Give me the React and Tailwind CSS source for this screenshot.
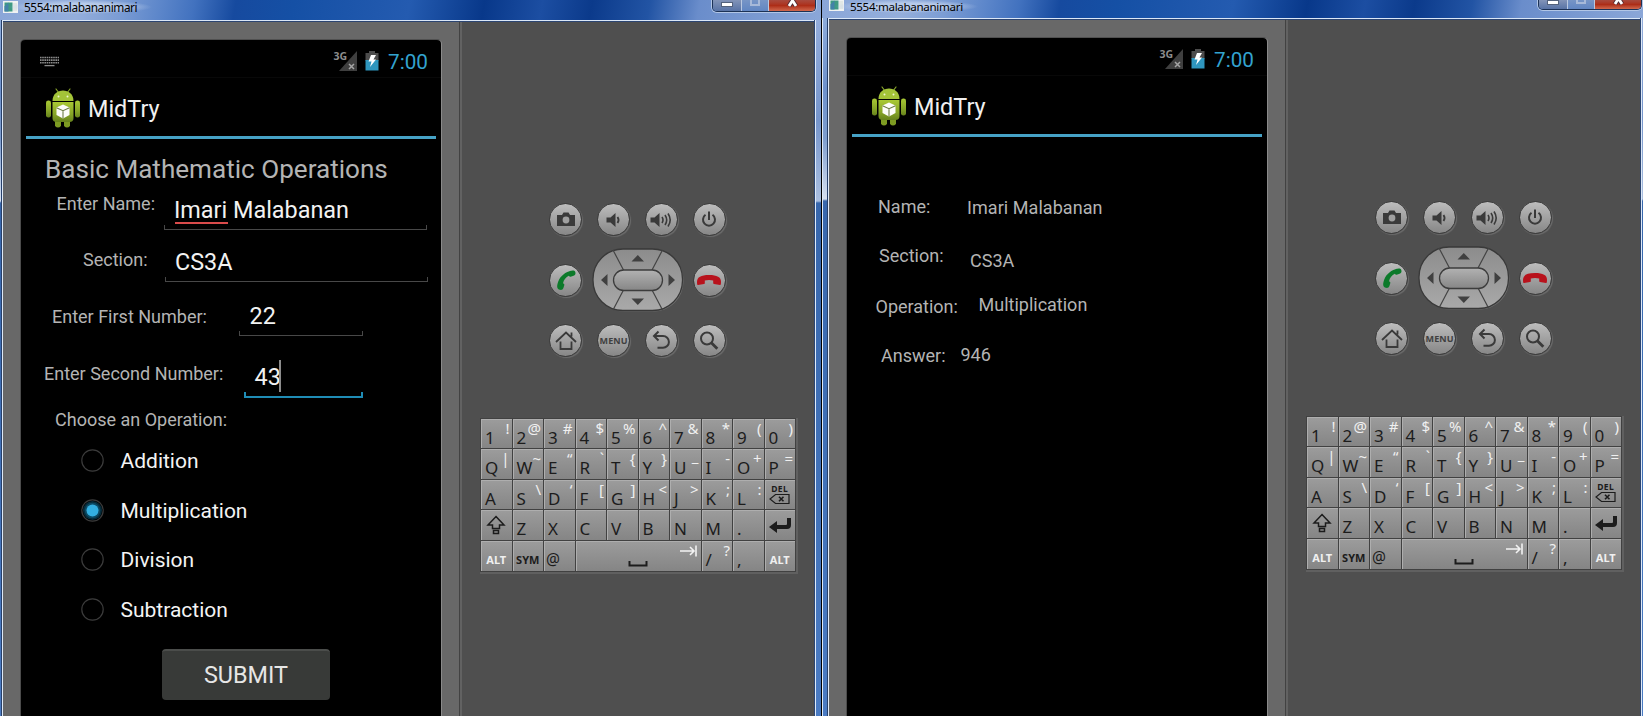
import React from "react";

const R = "font-['Roboto','Noto_Sans',sans-serif]";
const label = "text-[18px] leading-6 text-[#b4b4b4] whitespace-nowrap";
const entry = "text-[23.4px] leading-7 text-[#f2f2f2] whitespace-nowrap";

function AppIcon() {
  return (
    <svg width="36" height="40" viewBox="0 0 36 40">
      <defs>
        <linearGradient id="droid" x1="0" y1="0" x2="0" y2="1">
          <stop offset="0" stopColor="#a9c934" />
          <stop offset="0.6" stopColor="#87a527" />
          <stop offset="1" stopColor="#66821c" />
        </linearGradient>
      </defs>
      <path d="M11 1l3 4M25 1l-3 4" stroke="#86a32a" strokeWidth="1.2" strokeLinecap="round" />
      <path d="M7.500 13C7.500 6 12.500 2.500 18 2.500S28.500 6 28.500 13z" fill="#a3c338" />
      <circle cx="13.500" cy="8.500" r="1" fill="#eef5cf" />
      <circle cx="22.500" cy="8.500" r="1" fill="#eef5cf" />
      <rect x="1" y="12.500" width="5" height="17" rx="2.300" fill="url(#droid)" />
      <rect x="30" y="12.500" width="5" height="17" rx="2.300" fill="url(#droid)" />
      <path d="M10 30h6v8q-3 3-6 0zM19 30h6v8q-3 3-6 0z" fill="#7d9b22" />
      <path d="M7.500 14h21v16q0 4-4 4h-13q-4 0-4-4z" fill="url(#droid)" />
      <path d="M18 16.500l6.500 3v7.500l-6.500 3.500-6.500-3.500v-7.500z" fill="#fdfdfa" />
      <path d="M11.500 19.700l6.500 3 6.500-3M18 22.700v7.500" stroke="#6d7c45" strokeWidth="1.100" fill="none" />
    </svg>
  );
}

function StatusBar({ keyboard }) {
  return (
    <div className="flex h-[38px] shrink-0 items-start border-b border-[#080808] pl-[19px] pr-[13px]">
      {keyboard && (
        <svg className="mt-4" width="19" height="11" viewBox="0 0 19 11">
          {[1, 3.6, 6.2].map((y) => (
            <path key={y} d={`M0 ${y + 0.5}h19`} stroke="#8a8a8a" strokeWidth="1.600" strokeDasharray="1.600 0.600" />
          ))}
          <path d="M4.500 9.600h10" stroke="#8a8a8a" strokeWidth="1.300" />
        </svg>
      )}
      <div className="ml-auto flex">
        <span className="mt-[10px] font-['Noto_Sans','Open_Sans',sans-serif] text-[10.500px] font-bold leading-3 text-[#8d8d8d]">3G</span>
        <svg className="-ml-[8px] mt-[11px]" width="18" height="20" viewBox="0 0 18 20">
          <path d="M18 0v20H0z" fill="#3f3f3f" />
          <path d="M10 13l5 5M15 13l-5 5" stroke="#a5a5a5" strokeWidth="1.500" />
        </svg>
        <svg className="ml-2 mt-[11px]" width="14" height="20" viewBox="0 0 14 20">
          <path d="M4 0h6v2h3.500v8h-13V2H4z" fill="#4c4c4c" />
          <path d="M.5 9h13v10.500h-13z" fill="#2f96be" />
          <path d="M6 4h5L8.500 8.500H11L5 16l1.500-5.500H3.500z" fill="#fff" />
        </svg>
        <span className="ml-[9px] mt-[8px] text-[20.700px] leading-7 text-[#33a3cf]">7:00</span>
      </div>
    </div>
  );
}

function Screen({ keyboard, children }) {
  return (
    <div className={`${R} flex h-[700px] w-[420px] shrink-0 flex-col rounded-t bg-black shadow-[1px_0_0_#8a8a8a,-1px_0_0_#4c4c4c,0_-1px_0_#505050]`}>
      <StatusBar keyboard={keyboard} />
      <div className="mx-[5px] flex h-[61px] shrink-0 items-start border-b-[3px] border-[#46a2c6] pl-[19px]">
        <div className="mt-[10px]"><AppIcon /></div>
        <span className="ml-[7px] mt-[17px] text-[23.400px] leading-7 text-[#f0f0f0]">MidTry</span>
      </div>
      {children}
    </div>
  );
}

function Underline({ focus }) {
  return focus ? (
    <div className="h-[6px] border-x-[2px] border-b-2 border-[#1f8cb5]" />
  ) : (
    <div className="h-[5px] border-x border-b border-[#484848]" />
  );
}

function Radio({ text, on }) {
  return (
    <div className="flex h-[49.500px] items-center pl-[60px]">
      <svg width="23" height="23" viewBox="0 0 23 23">
        {on && <circle cx="11.500" cy="11.500" r="9.500" fill="#062c3b" />}
        {on && <circle cx="11.500" cy="11.500" r="7.800" fill="#0c4a63" />}
        <circle cx="11.500" cy="11.500" r="10.700" fill="none" stroke="#3b3b3b" strokeWidth="1.200" />
        {on && <circle cx="11.500" cy="11.500" r="6" fill="#33b0e2" />}
      </svg>
      <span className="ml-[16.500px] mt-px text-[21px] leading-7 text-[#f4f4f4]">{text}</span>
    </div>
  );
}

function FormScreen() {
  return (
    <Screen keyboard>
      <div className="h-[50px] pl-[24px] pt-[14px] text-[26.100px] leading-8 text-[#b4b4b4]">Basic Mathematic Operations</div>
      <div className="flex h-[51px] items-start">
        <div className={`${label} w-[143px] pl-[35.500px] pt-[3px]`}>Enter Name:</div>
        <div className="mt-[7px] flex h-[34px] w-[263px] flex-col justify-between">
          <div className={`${entry} pl-[10px]`}>
            <span className="relative">
              Imari
              <span className="absolute bottom-0 left-[1px] h-[2.500px] w-[53px] bg-[#d94b4b]" />
            </span>{" "}
            Malabanan
          </div>
          <Underline />
        </div>
      </div>
      <div className="flex h-[50px] items-start">
        <div className={`${label} w-[144px] pl-[62px] pt-2`}>Section:</div>
        <div className="mt-[8px] flex h-[34px] w-[263px] flex-col justify-between">
          <div className={`${entry} pl-[10px]`}>CS3A</div>
          <Underline />
        </div>
      </div>
      <div className="flex h-[55px] items-start">
        <div className={`${label} w-[218px] pl-[31px] pt-[15px]`}>Enter First Number:</div>
        <div className="mt-[12px] flex h-[34px] w-[124px] flex-col justify-between">
          <div className={`${entry} pl-[10.500px]`}>22</div>
          <Underline />
        </div>
      </div>
      <div className="flex h-[60px] items-start">
        <div className={`${label} w-[223px] pl-[23px] pt-[17px]`}>Enter Second Number:</div>
        <div className="mt-[18px] flex h-[35px] w-[119px] flex-col justify-between">
          <div className={`${entry} flex pl-[10.500px]`}>
            <span>43</span>
            <span className="-ml-[2px] -mt-[3px] h-8 w-[2px] bg-[#8c8c8c]" />
          </div>
          <Underline focus />
        </div>
      </div>
      <div className={`${label} h-[31px] pl-[34px] pt-[3px]`}>Choose an Operation:</div>
      <Radio text="Addition" />
      <Radio text="Multiplication" on />
      <Radio text="Division" />
      <Radio text="Subtraction" />
      <div className="ml-[141px] mt-[15px] flex h-[51px] w-[168px] items-center justify-center rounded-sm border-t-2 border-[#4b4d4b] bg-[#383a38] pt-px text-[23.400px] text-[#e6e6e6]">
        SUBMIT
      </div>
    </Screen>
  );
}

function ResultScreen() {
  return (
    <Screen>
      <div className="mt-[58px] flex h-[49px] items-start">
        <div className={`${label} w-[120px] pl-[31px]`}>Name:</div>
        <div className={`${label} pt-px tracking-[0.060px]`}>Imari Malabanan</div>
      </div>
      <div className="flex h-[49px] items-start">
        <div className={`${label} w-[120px] pl-[32px]`}>Section:</div>
        <div className={`${label} ml-[3px] pt-[5px]`}>CS3A</div>
      </div>
      <div className="flex h-[50px] items-start">
        <div className={`${label} w-[120px] pl-[28.500px] pt-[2px]`}>Operation:</div>
        <div className={`${label} ml-[11.500px]`}>Multiplication</div>
      </div>
      <div className="flex items-start">
        <div className={`${label} w-[120px] pl-[34px] pt-[1px]`}>Answer:</div>
        <div className={`${label} -ml-[6.500px]`}>946</div>
      </div>
    </Screen>
  );
}

function RoundButton({ children }) {
  return (
    <div className="flex h-[33px] w-[33px] items-center justify-center rounded-full border border-[#3c3c3c] bg-linear-to-b from-[#bdbdbd] to-[#878787] shadow-[1px_1px_1px_#6c6c6c]">
      {children}
    </div>
  );
}

function Ico({ children, size = 24 }) {
  return (
    <svg width={size} height={size} viewBox="0 0 24 24" fill="none" stroke="#3a3a3a" strokeWidth="2" className="shrink-0">
      {children}
    </svg>
  );
}

function DPad() {
  return (
    <svg width="92" height="64" viewBox="0 0 92 64">
      <defs>
        <linearGradient id="pad" x1="0" y1="0" x2="0" y2="1">
          <stop offset="0" stopColor="#8c8c8c" />
          <stop offset="1" stopColor="#a9a9a9" />
        </linearGradient>
        <linearGradient id="padc" x1="0" y1="0" x2="0" y2="1">
          <stop offset="0" stopColor="#b2b2b2" />
          <stop offset="1" stopColor="#868686" />
        </linearGradient>
      </defs>
      <rect x="2" y="2" width="89.500" height="61.500" rx="30" fill="#707070" />
      <rect x="1" y="1" width="89.500" height="61.500" rx="30" fill="url(#pad)" stroke="#393939" strokeWidth="1.300" />
      <path d="M21 2l11 21M70.500 2l-11 21M21 62l11-21M70.500 62l-11-21" stroke="#444" strokeWidth="1.200" />
      <rect x="21.500" y="22" width="49" height="20.500" rx="10.200" fill="url(#padc)" stroke="#3c3c3c" strokeWidth="1.300" />
      <path d="M39.500 13.500h12.500l-6.200-6.500zM39.500 50.500h12.500l-6.200 6.500zM15.500 26v12l-6.500-6zM76.500 26v12l6.500-6z" fill="#404040" />
    </svg>
  );
}

function Controls() {
  return (
    <div className="ml-[80px] mt-[167.500px] grid w-[191px] grid-cols-4 grid-rows-[60.500px_60.500px_60.500px] place-items-center">
      <RoundButton>
        <Ico>
          <path d="M3 7h5l1.500-2.500h5L16 7h5v11H3z" fill="#3a3a3a" stroke="none" />
          <circle cx="12" cy="12" r="3.400" fill="#a0a0a0" stroke="none" />
        </Ico>
      </RoundButton>
      <RoundButton>
        <Ico>
          <path d="M4.500 9.500h4l5-4.500v14l-5-4.500h-4z" fill="#3a3a3a" stroke="none" />
          <path d="M15.500 9q2.200 3 0 6" strokeWidth="1.800" />
        </Ico>
      </RoundButton>
      <RoundButton>
        <Ico>
          <path d="M1.500 9.500h4l5-4.500v14l-5-4.500h-4z" fill="#3a3a3a" stroke="none" />
          <path d="M13 9q2 3 0 6M16 7q3.400 5 0 10M19 5.500q4.400 6.500 0 13" strokeWidth="1.600" />
        </Ico>
      </RoundButton>
      <RoundButton>
        <Ico>
          <path d="M12 3.500v8.500M8.500 6.800a6 6 0 1 0 7 0" />
        </Ico>
      </RoundButton>
      <RoundButton>
        <Ico>
          <path d="M3.500 16C5 9.500 9.500 5 15.500 3.200l.3-.1c1.700-.6 4.700-1.300 5.500.9.700 2-.3 3.200-1.700 3.700l-2.200.8c-1.200.4-2 .2-2.600-.8C12 9 9.700 11.800 9 15.200c1.300.5 1.600 1.200 1.200 2.400l-.8 2.400c-.5 1.400-1.700 2.200-3.600 1.800C3.200 21.200 2.800 19 3.500 16z" fill="#0c7a2a" stroke="none" />
        </Ico>
      </RoundButton>
      <div className="col-span-2 -my-1"><DPad /></div>
      <RoundButton>
        <svg width="26" height="14" viewBox="0 0 26 14" className="shrink-0">
          <path d="M1 9C1 4 5 2 13 2s12 2 12 7c0 2.600-.4 3-1 3l-6-1c-.8-.2-.8-.6-.8-1V7.500q-4.200-1-8.400 0V10c0 .6 0 .8-.8 1l-6 1C1.400 12 1 11.600 1 9z" fill="#b8121c" />
        </svg>
      </RoundButton>
      <RoundButton>
        <Ico>
          <path d="M2 13L12 3.500 22 13M17.500 7.500V3.500M6.500 12.500V20h11v-7.500" strokeWidth="1.800" />
        </Ico>
      </RoundButton>
      <RoundButton>
        <span className="font-['Open_Sans','Noto_Sans',sans-serif] text-[9px] font-bold tracking-[0.100px] text-[#404040]">MENU</span>
      </RoundButton>
      <RoundButton>
        <Ico>
          <path d="M9.500 2.500L5 7l4.500 4.500M5 7h9a5.900 5.900 0 0 1 0 11.800H8.500" />
        </Ico>
      </RoundButton>
      <RoundButton>
        <Ico>
          <circle cx="10" cy="9.500" r="6" />
          <path d="M14.300 13.800l6 6" strokeWidth="2.800" />
        </Ico>
      </RoundButton>
    </div>
  );
}

const keyRows = [
  ["1!", "2@", "3#", "4$", "5%", "6^", "7&", "8*", "9(", "0)"],
  ["Q|", "W~", "E“", "R`", "T{", "Y}", "U_", "I-", "O+", "P="],
  ["A", "S\\", "D‘", "F[", "G]", "H<", "J>", "K;", "L:"],
];

const keyFace = "flex min-w-0 bg-linear-to-b from-[#9c9c9c] to-[#858585] shadow-[inset_1px_1px_0_#aeaeae]";

function Key({ k }) {
  const tone = k[0] === "U" ? "leading-[14px]" : "leading-[19px]";
  return (
    <div className={`${keyFace} pl-[4px] pr-[2px]`}>
      <span className="mt-[7px] text-[17px] leading-6 text-[#1c1c1c]">{k[0]}</span>
      {k[1] && <span className={`-ml-2 grow text-right text-[15px] text-[#f0f0f0] ${tone}`}>{k[1]}</span>}
    </div>
  );
}

const small = "items-end justify-center pb-[3px] text-[11px] font-bold leading-[16px]";

function Keyboard() {
  return (
    <div className="ml-[18px] mt-[46.500px] grid h-[154px] w-[316px] grid-cols-10 grid-rows-5 gap-px border border-[#414141] bg-[#414141] font-['Noto_Sans','Open_Sans',sans-serif] shadow-[1px_1px_0_1px_#606060]">
      {keyRows.flat().map((k) => <Key key={k} k={k} />)}
      <div className={`${keyFace} flex-col items-center pt-[4px]`}>
        <span className="text-[8.500px] font-bold leading-[9px] tracking-[0.500px] text-[#1c1c1c]">DEL</span>
        <svg width="21" height="12" viewBox="0 0 21 12">
          <path d="M6.500 1.500H20v9H6.500L1 6z" fill="none" stroke="#1c1c1c" strokeWidth="1.200" />
          <path d="M10 3.800l4.500 4.500M14.500 3.800L10 8.300" stroke="#1c1c1c" strokeWidth="1.600" />
        </svg>
      </div>
      <div className={`${keyFace} items-center justify-center`}>
        <svg width="20" height="20" viewBox="0 0 20 20" fill="none" stroke="#1c1c1c" strokeWidth="1.500">
          <path d="M10 1.500L18 10h-4.500v3.500h-7V10H2zM7.500 15.500h5v3h-5z" />
        </svg>
      </div>
      {["Z", "X", "C", "V", "B", "N", "M", "."].map((k) => <Key key={k} k={k} />)}
      <div className={`${keyFace} items-center justify-center`}>
        <svg width="24" height="18" viewBox="0 0 24 18">
          <path d="M1 11l8-6v4h9q1 0 1-1V2h4v7q0 4-4 4H9v4z" fill="#1c1c1c" />
        </svg>
      </div>
      <div className={`${keyFace} ${small} text-[#f0f0f0]`}>ALT</div>
      <div className={`${keyFace} ${small} text-[#1c1c1c]`}>SYM</div>
      <div className={`${keyFace} items-end pb-[2px] pl-[2px] text-[15.500px] leading-5 text-[#1c1c1c]`}>@</div>
      <div className={`${keyFace} col-span-4`}>
        <svg width="125" height="30" viewBox="0 0 125 30" fill="none">
          <path d="M53.500 20v4.500h17V20" stroke="#1c1c1c" strokeWidth="2" />
          <path d="M104 10h14M114 6l4 4-4 4M120 4.500v11" stroke="#f2f2f2" strokeWidth="1.600" />
        </svg>
      </div>
      <Key k="/?" />
      <Key k="," />
      <div className={`${keyFace} ${small} text-[#f0f0f0]`}>ALT</div>
    </div>
  );
}

function TitleBar({ short }) {
  return (
    <div className={`${short ? "h-[18px] pr-[1px]" : "h-5 pr-[5px]"} flex shrink-0 items-start bg-[linear-gradient(100deg,#8aa6d8_0%,#94aedb_10%,#7c9dd4_15%,#5c86ca_20%,#4272bf_24%,#164a9f_29%,#1550a5_36%,#245bb0_50%,#08388a_59%,#1c4ea2_66%,#0b3a8b_72%,#2254a4_79%,#6a8dcb_85%,#8ba7d8_100%)] pl-[7px]`}>
      <svg className={short ? "-mt-px" : "mt-px"} width="15" height="12" viewBox="0 0 15 12">
        <rect width="15" height="12" fill="#f0f2f2" />
        <rect x="1.500" y="1.500" width="8" height="9" fill="#3f9a83" />
        <path d="M1.500 10.500v-5l4-4v9z" fill="#4382a8" />
        <path d="M11 2v8M13 2v8" stroke="#d3dcd8" />
      </svg>
      <span className={`${short ? "text-[11.600px] leading-[13px] tracking-[-0.330px]" : "text-[11.800px] leading-[14px] tracking-[-0.420px]"} -ml-[9px] bg-[radial-gradient(closest-side,#b7caea_50%,transparent)] px-[15px] font-['Noto_Sans','Open_Sans',sans-serif] text-black`}>
        5554:malabananimari
      </span>
      <div className={`${short ? "h-[10px]" : "h-3"} ml-auto flex w-[104px] overflow-hidden rounded-b-[5px] border border-t-0 border-[#1c3256] shadow-[0_0_0_1px_#b2c6e6]`}>
        <div className="flex w-[29px] items-end justify-center border-r border-[#b9c8e0] bg-linear-to-b from-[#8294b8] to-[#5873a5] pb-1">
          <div className="h-[5px] w-[12px] border border-[#53627c] bg-white" />
        </div>
        <div className="flex w-[27px] items-end justify-center border-r border-[#b9c8e0] bg-linear-to-b from-[#7795c6] to-[#6186c2] pb-[5px]">
          <div className="h-[6px] w-[10px] border-2 border-t-0 border-[#a7b9d8]" />
        </div>
        <div className="flex grow items-end justify-center bg-linear-to-b from-[#a84a3e] via-[#ad2d17] to-[#d0674d] pb-1">
          <svg width="13" height="9" viewBox="0 0 13 9" className="shrink-0">
            <path d="M3 -3l7 11M10 -3L3 8" stroke="#4c2a33" strokeWidth="4.600" />
            <path d="M3 -3l7 11M10 -3L3 8" stroke="#fff" strokeWidth="2.800" />
          </svg>
        </div>
      </div>
    </div>
  );
}

function EmulatorWindow({ children, className, right, short }) {
  return (
    <div className={`flex h-[716px] shrink-0 flex-col overflow-hidden bg-[#4573b8] ${className}`}>
      <TitleBar short={short} />
      <div className="flex grow">
        <div className="w-[7px] shrink-0 border-x border-[#dfeaf8] bg-[linear-gradient(#8dacdb_0px,#6d91cc_70px,#7d9dce_120px,#d6e0f0_181px,#3767ad_183px,#4b7cc4_100%)] shadow-[inset_-1px_0_0_#27406b]" />
        <div className="flex w-[811px] shrink-0 border-t border-[#dbe7f7] bg-[#4f4f4f]">
          <div className="w-[456px] shrink-0 border-t border-[#2c4571] bg-[#686868] pl-[18px] pt-[18px]">{children}</div>
          <div className="w-[3px] shrink-0 border-l border-t border-l-[#424242] border-t-[#2c4571] bg-[#626262]" />
          <div className="grow border-t border-[#2c4571]">
            <Controls />
            <Keyboard />
          </div>
        </div>
        <div className={`${right} shrink-0 border-l border-[#2c4571] bg-[linear-gradient(#93addb_0px,#7595cc_100px,#aabfe0_181px,#3767ad_183px,#4b7cc4_100%)] shadow-[inset_1px_0_0_#dfeaf8]`} />
      </div>
    </div>
  );
}

export default function App() {
  return (
    <div className="flex h-[716px] w-[1646px] overflow-hidden bg-white">
      <EmulatorWindow className="-ml-1 w-[826px] border-r border-black" right="w-[7px]">
        <FormScreen />
      </EmulatorWindow>
      <EmulatorWindow className="w-[821px]" right="w-[3px]" short>
        <ResultScreen />
      </EmulatorWindow>
    </div>
  );
}
